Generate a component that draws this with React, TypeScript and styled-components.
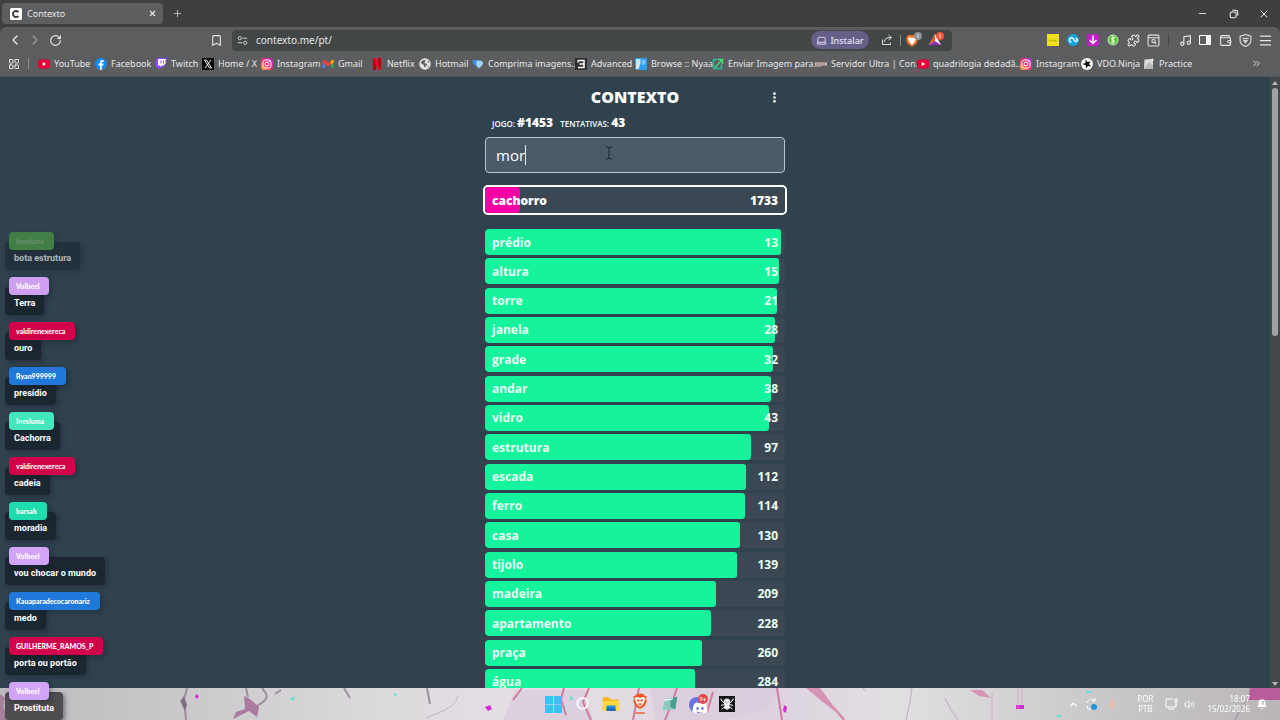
import React from 'react';
import styled, { createGlobalStyle } from 'styled-components';
import {
  ChevronLeft, ChevronRight, RotateCw, Bookmark as BookmarkIcon, LayoutGrid, Laptop, Share, Puzzle,
  Music, PanelRight, Wallet, ShieldCheck, Menu, X, Plus, Minus, Copy, Volume2, ChevronUp, ChevronsRight,
  EllipsisVertical, SquareArrowOutUpRight,
} from 'lucide-react';
import { FaDiscord } from 'react-icons/fa6';

const UI = '"Noto Sans", "Open Sans", sans-serif';
const GAME = '"Open Sans", "Noto Sans", sans-serif';

const Global = createGlobalStyle`
  *, *::before, *::after { box-sizing: border-box; }
  body { margin: 0; background: #2f424e; overflow: hidden; }
  button, input { font: inherit; color: inherit; border: 0; background: none; padding: 0; margin: 0; outline: 0; }
  button { display: flex; align-items: center; justify-content: center; }
  a { color: inherit; text-decoration: none; }
  svg { display: block; flex: none; }
  ul { list-style: none; margin: 0; padding: 0; }
`;

const Screen = styled.div`
  height: 100vh;
  display: flex;
  flex-direction: column;
  position: relative;
  overflow: hidden;
  font-family: ${UI};
  color: #e8e8ea;
`;

/* ---------- browser chrome ---------- */
const TabStrip = styled.header`
  height: 27px;
  flex: none;
  display: flex;
  align-items: center;
  padding: 0 6px 0 2px;
  background: #3f3f41;
`;
const Tab = styled.div`
  width: 161px;
  height: 21px;
  display: flex;
  align-items: center;
  gap: 5px;
  padding: 0 6px 0 8px;
  border-radius: 4px;
  background: #5d5e60;
  font-size: 9px;
`;
const TabTitle = styled.span`
  flex: 1;
`;
const PlusButton = styled.button`
  width: 28px;
  height: 20px;
`;
const WindowControls = styled.div`
  margin-left: auto;
  display: flex;
`;
const WindowButton = styled.button`
  width: 31px;
  height: 20px;
  &:last-child { width: 20px; margin-left: 5px; }
`;
const Toolbar = styled.div`
  height: 26px;
  flex: none;
  display: flex;
  align-items: center;
  padding: 0 5px;
  background: #5c5d5f;
  border-radius: 6px 6px 0 0;
`;
const ToolbarBack = styled.div`
  background: #3f3f41;
  flex: none;
`;
const IconButton = styled.button<{ $dim?: boolean }>`
  width: 20px;
  height: 20px;
  flex: none;
  opacity: ${(p) => (p.$dim ? 0.45 : 1)};
`;
const BookmarkButton = styled(IconButton)`
  margin-left: 141px;
  margin-right: 6px;
`;
const AddressBar = styled.div`
  flex: 1;
  max-width: 720px;
  height: 21px;
  display: flex;
  align-items: center;
  gap: 8px;
  padding: 0 5px;
  border-radius: 4px;
  background: #434647;
`;
const AddressInput = styled.input`
  flex: 1;
  min-width: 0;
  font-size: 10px;
`;
const InstallButton = styled.button`
  width: 58px;
  height: 18px;
  gap: 3px;
  border-radius: 9px;
  background: #665f87;
  color: #e6e2fb;
  font-size: 9px;
  font-weight: 500;
`;
const AddressActions = styled.div`
  display: flex;
  align-items: center;
  gap: 3px;
`;
const Divider = styled.span`
  width: 1px;
  height: 11px;
  background: #8b8c8e;
`;
const Extensions = styled.div`
  margin-left: auto;
  display: flex;
  align-items: center;
`;
const ExtensionDivider = styled.span`
  width: 1px;
  height: 12px;
  margin: 0 6px 0 5px;
  background: #47484a;
`;
const Bookmarks = styled.nav`
  height: 24px;
  flex: none;
  display: grid;
  grid-template-columns: 30px 57px 60px 47px 59px 61px 49px 48px 53px 103px 60px 77px 103px 102px 103px 61px 62px 1fr 20px;
  align-items: center;
  padding: 0 14px 2px 8px;
  background: #5c5d5f;
  border-bottom: 1px solid #4e5558;
  font-size: 9px;
  line-height: 12px;
`;
const BookmarkLink = styled.a`
  display: flex;
  align-items: center;
  gap: 4px;
  white-space: nowrap;
`;
const AppsCell = styled.div`
  display: flex;
  align-items: center;
  gap: 8px;
`;

/* ---------- game page ---------- */
const Viewport = styled.div`
  flex: 1;
  min-height: 0;
  display: flex;
  background: #2f424e;
`;
const Page = styled.main`
  flex: 1;
  min-width: 0;
  overflow: hidden;
  display: flex;
  justify-content: center;
  font-family: ${GAME};
  color: #fff;
`;
const Column = styled.div`
  width: 300px;
  flex: none;
  padding-top: 8px;
`;
const TitleRow = styled.div`
  display: grid;
  grid-template-columns: 22px 1fr 22px;
  align-items: center;
  height: 24px;
`;
const Title = styled.h1`
  grid-column: 2;
  margin: 0;
  text-align: center;
  font-size: 16px;
  line-height: 24px;
  font-weight: 800;
`;
const Stats = styled.div`
  display: flex;
  gap: 7px;
  align-items: baseline;
  padding: 4px 7px 0;
  height: 28px;
  font-size: 8px;
  line-height: 20px;
  font-weight: 600;
  b { font-size: 12px; font-weight: 800; }
`;
const WordField = styled.label`
  position: relative;
  display: flex;
  align-items: center;
  height: 36px;
  padding: 0 10px;
  border: 1px solid #b9c6c8;
  border-radius: 4px;
  background: #4a5a67;
  font-size: 15px;
`;
const WordInput = styled.input`
  field-sizing: content;
  min-width: 8px;
`;
const Caret = styled.span`
  width: 1px;
  height: 20px;
  background: #e9eef0;
`;
const Pointer = styled.svg`
  position: absolute;
  left: 40%;
  top: 8px;
`;
const Guesses = styled.ul`
  display: flex;
  flex-direction: column;
  justify-content: space-between;
  min-height: 466px;
  margin-top: 14px;
`;
const Guess = styled.li<{ $current?: boolean }>`
  position: relative;
  display: flex;
  justify-content: space-between;
  align-items: center;
  height: 26px;
  padding: 0 7px;
  border-radius: 4px;
  overflow: hidden;
  background: #3b4853;
  font-size: 12px;
  font-weight: 700;
  color: #e9fff6;
  ${(p) => p.$current && 'font-weight: 800; color: #fff;'}
`;
const Latest = styled.div`
  margin: 12px -2px 0;
  border: 2px solid #fff;
  border-radius: 5px;
`;
const Bar = styled.span<{ $tone: string }>`
  position: absolute;
  inset: 0 auto 0 0;
  border-radius: 3px;
  background: ${(p) => p.$tone};
`;
const Word = styled.span`
  position: relative;
`;
const ScrollTrack = styled.div`
  width: 10px;
  flex: none;
  display: flex;
  flex-direction: column;
  align-items: center;
  gap: 3px;
  padding: 4px 0 2px;
  background: #45484b;
`;
const ScrollSpace = styled.div`
  flex: 1;
  width: 6px;
`;
const ScrollThumb = styled.div`
  width: 6px;
  height: 41%;
  border-radius: 3px;
  background: #a0a1a3;
`;

/* ---------- chat overlay ---------- */
const Chat = styled.ul`
  position: absolute;
  left: 5px;
  bottom: 0;
  display: flex;
  flex-direction: column;
  gap: 7px;
`;
const Message = styled.li<{ $faded?: boolean }>`
  display: flex;
  flex-direction: column;
  align-items: flex-start;
  height: 38px;
  opacity: ${(p) => (p.$faded ? 0.6 : 1)};
`;
const Author = styled.span<{ $tone: string; $quiet?: boolean }>`
  z-index: 1;
  height: 18px;
  margin-left: 4px;
  padding: 0 10px 0 7px;
  border-radius: 4px;
  background: ${(p) => p.$tone};
  box-shadow: 2px 2px 5px rgba(20, 25, 40, 0.4);
  color: ${(p) => (p.$quiet ? '#8fbf7f' : '#fff')};
  font-family: Lato, sans-serif;
  font-size: 7px;
  line-height: 18px;
  font-weight: 900;
`;
const Bubble = styled.span<{ $over?: boolean }>`
  height: 29px;
  margin-top: -8px;
  padding: 9px 9px 0;
  border-radius: 4px;
  background: ${(p) => (p.$over ? '#4d4c4f' : '#1b2730')};
  box-shadow: 2px 2px 4px rgba(32, 26, 56, 0.45);
  color: #fff;
  font-family: Roboto, sans-serif;
  font-size: 9px;
  line-height: 14px;
  font-weight: 700;
  white-space: nowrap;
`;

/* ---------- taskbar ---------- */
const Taskbar = styled.footer`
  position: relative;
  height: 32px;
  flex: none;
  display: grid;
  grid-template-columns: 1fr auto 1fr;
  align-items: center;
  background: #d8d4d9;
  overflow: hidden;
`;
const Marble = styled.svg`
  position: absolute;
  inset: 0;
  width: 100%;
  height: 100%;
`;
const Pinned = styled.div`
  position: relative;
  grid-column: 2;
  display: flex;
`;
const PinnedButton = styled.button`
  width: 29px;
  height: 30px;
`;
const Tray = styled.div`
  position: relative;
  display: flex;
  align-items: center;
  justify-content: flex-end;
  gap: 6px;
  padding-right: 12px;
  color: #fff;
  font-size: 8px;
  line-height: 10px;
`;
const TrayStack = styled.div<{ $end?: boolean }>`
  display: flex;
  flex-direction: column;
  align-items: ${(p) => (p.$end ? 'flex-end' : 'center')};
  margin-left: ${(p) => (p.$end ? '6px' : '12px')};
  margin-right: ${(p) => (p.$end ? '0' : '6px')};
`;

/* ---------- drawings ---------- */
const S = ({ s = 12, children }: { s?: number; children: React.ReactNode }) => (
  <svg width={s} height={s} viewBox="0 0 24 24" aria-hidden="true">{children}</svg>
);
const YouTube = () => <S><rect y="3" width="24" height="18" rx="4" fill="#e5003c" /><path d="M9.500 8v8l7-4z" fill="#fff" /></S>;
const Facebook = () => <S><circle cx="12" cy="12" r="12" fill="#1688f2" /><path d="M10 24v-9H7v-4h3V8.500C10 5.500 12 4 14.500 4H17v4h-2c-1 0-1.500.5-1.500 1.500V11H17l-.6 4h-2.900v9z" fill="#fff" /></S>;
const Twitch = () => <S><path d="M5 0 1 4v15h5v5l5-5h4l8-8V0z" fill="#9146ff" /><path d="M6 2h15v9l-4 4h-4l-3 3v-3H6z" fill="#fff" /><path d="M11 5h2v6h-2zM16 5h2v6h-2z" fill="#9146ff" /></S>;
const XLogo = () => <S><rect width="24" height="24" fill="#0c0c0c" /><path d="M5 4h4l10 16h-4zM18 4l-12 16" stroke="#fff" strokeWidth="1.800" fill="none" /></S>;
const Insta = () => (
  <S>
    <defs><linearGradient id="ig" x1="0" y1="1" x2="1" y2="0"><stop offset="0" stopColor="#ffc13c" /><stop offset=".45" stopColor="#fb2c62" /><stop offset="1" stopColor="#a72be0" /></linearGradient></defs>
    <rect width="24" height="24" rx="6" fill="url(#ig)" />
    <rect x="4" y="4" width="16" height="16" rx="5" fill="none" stroke="#fff" strokeWidth="2" /><circle cx="12" cy="12" r="4" fill="none" stroke="#fff" strokeWidth="2" /><circle cx="17" cy="7" r="1.200" fill="#fff" />
  </S>
);
const Gmail = () => <S><path d="M1 20V6h5v14z" fill="#4285f4" /><path d="M18 20V6h5v14z" fill="#34a853" /><path d="M1 5l4-1 7 6 7-6 4 1v4l-11 8L1 9z" fill="#ea4335" /><path d="M18 5l5-1v5l-5 4z" fill="#fbbc04" /></S>;
const Netflix = () => <S><path d="M4 0h6v24H4zM14 0h6v24h-6z" fill="#b00012" /><path d="M4 0h6l10 24h-6z" fill="#e50920" /></S>;
const Hotmail = () => <S><circle cx="12" cy="12" r="11.500" fill="#e3e4e5" /><path d="M4 8c4-5 8-5 9-3s-3 3-2 5 5 0 5 3-3 2-4 6c-2-1-2-5-4-6S4 11 4 8zM17 4l4 5-3 1zM18 15l2 1-3 4z" fill="#606163" /></S>;
const Compress = () => <S><path d="M1 4h13v9l-3 5C4 15 1 11 1 4z" fill="#3f8ff0" /><path d="M9 7c2-3 12-3 13 3 0 5-6 9-9 11-2-3-6-9-4-14z" fill="#a5d2fb" /></S>;
const Advanced = () => <S><rect width="24" height="24" fill="#2d2f31" /><path d="M6 5h12v14H6M9 12h9M6 9V5" fill="none" stroke="#fff" strokeWidth="3" /></S>;
const Nyaa = () => <S><rect width="24" height="24" rx="2" fill="#2a9df4" /><path d="M2 2h9v9l-4 11H2z" fill="#cfeaff" /><path d="M13 4h8v8l-6 3z" fill="#7cc6fb" /></S>;
const SendImage = () => <S><path d="M11 3H3v18h16v-8" fill="none" stroke="#2fb9a0" strokeWidth="3" /><path d="M6 19 20 4M12 3h9v9" fill="none" stroke="#3ee07e" strokeWidth="3" /></S>;
const Server = () => <S><path d="M0 9h24v6H0z" fill="#d5c8c8" /><path d="M2 12h20" stroke="#8b4c50" strokeWidth="2" strokeDasharray="3 1" /></S>;
const Ninja = () => <S><circle cx="12" cy="12" r="12" fill="#f4f4f4" /><path d="M9 3l4 5 6-1-3 5 4 5-6-1-4 5v-6l-7-3 6-2z" fill="#111" /></S>;
const Practice = () => <S><path d="M3 3l14-1 3 5v15H2z" fill="#dcdedb" /><path d="M3 20 12 8l8 6v8H3z" fill="#b7bab6" /><path d="m19 0 1 3 3 1-3 1-1 3-1-3-3-1 3-1z" fill="#fff" /></S>;
const Tune = () => <S s={11}><g fill="none" stroke="#d8d9da" strokeWidth="2"><circle cx="6" cy="7" r="3.500" /><path d="M12 7h10M2 17h10" /><circle cx="18" cy="17" r="3.500" /></g></S>;
const Lion = ({ s = 14 }: { s?: number }) => (
  <S s={s}><path d="M7 1h10l2 3 3 1-1 4 1 3-3 8-7 4-7-4-3-8 1-3-1-4 3-1z" fill="#f05a24" /><path d="M6 6l6 1 6-1 2 3-3 7-5 5-5-5-3-7z" fill="#fff" /><path d="M7 9l4 1v3l-2 1zM17 9l-4 1v3l2 1zM9 16l3-1 3 1-3 3z" fill="#f05a24" /></S>
);
const BraveShield = () => (
  <svg width="18" height="18" viewBox="0 0 18 18" aria-hidden="true">
    <path d="M3 4h8l2 3-1 5-5 4-5-4-1-5z" fill="#f2702a" /><path d="M4 6l3 1 3-1 1 2-2 4-2 2-2-2-2-4z" fill="#fff" />
    <circle cx="13" cy="5" r="4" fill="#8d9296" /><path d="M13 3v4" stroke="#e8e8e8" />
  </svg>
);
const Rewards = () => (
  <svg width="18" height="18" viewBox="0 0 18 18" aria-hidden="true">
    <path d="M7 3 13 14H1z" fill="#fff" /><path d="M7 3v7l-6 4z" fill="#f04c2e" /><path d="M1 14l6-4 6 4z" fill="#8b2bb8" />
    <circle cx="12" cy="5" r="4" fill="#f2593c" /><path d="M12 3v4" stroke="#ffd9cf" />
  </svg>
);
const GuardExt = () => <S><rect width="24" height="24" fill="#f0e11c" /><path d="M4 13h16" stroke="#b8a80c" strokeWidth="3" strokeDasharray="3 1" /></S>;
const BlueExt = () => <S><circle cx="12" cy="12" r="12" fill="#17a3e0" /><path d="M5 12a4 4 0 0 1 7-3l3 4a3 3 0 1 0 2-4M9 16a3 3 0 0 1-3-5" fill="none" stroke="#e9f8ff" strokeWidth="3" /></S>;
const DownExt = () => <S><rect width="24" height="24" rx="4" fill="#c31cc9" /><path d="M12 3v16M5 12l7 7 7-7" fill="none" stroke="#fff" strokeWidth="3" /></S>;
const CoinExt = () => <S><circle cx="12" cy="12" r="10" fill="#5bc92f" stroke="#d7e8d2" strokeWidth="2" /><path d="M16 8c-2-2-7-1-7 1.500S15 12 15 15s-5 3-7 1M12 5v14" fill="none" stroke="#fff" strokeWidth="2" /></S>;
const SearchTab = () => <S s={13}><g fill="none" stroke="#e2e2e3" strokeWidth="2"><rect x="2" y="2" width="20" height="20" rx="2" /><path d="M2 7h20" /><circle cx="12" cy="13" r="3" /><path d="m14 15 3 3" /></g></S>;
const Folder = () => <S s={18}><path d="M1 3h8l3 3h10v15H1z" fill="#f5b921" /><path d="M1 8h22v13H1z" fill="#fbd842" /><path d="M6 14h12v7H6z" fill="#2389dc" /><path d="M6 18h12v3H6z" fill="#1263b2" /></S>;
const Win = () => <S s={17}><g fill="#37c4f2"><path d="M0 0h11.500v11.500H0z" /><path d="M12.500 0H24v11.500H12.500zM0 12.500h11.500V24H0zM12.500 12.500H24V24H12.500z" /></g></S>;
const Notepad = () => <S s={17}><path d="M6 4l17-3-3 18-18 1z" fill="#8fc9bd" /><path d="M14 3l9-2-3 18-7-4z" fill="#4a9b91" /><path d="M5 6l12-2" stroke="#eef7f5" strokeWidth="2" /></S>;
const Spider = () => <S s={16}><rect width="24" height="24" fill="#141417" /><path d="M8 10V6c2-2 6-2 8 0v4l-1 4 1 4-4 2-4-2 1-4zM8 11 3 6v-2M16 11l5-5v-2M8 13l-5 1M16 13l5 1M8 16l-4 4M16 16l4 4" fill="#f1f1f1" stroke="#f1f1f1" strokeWidth="1.500" /><path d="M10 9l1 1M14 9l-1 1" stroke="#141417" strokeWidth="1.500" /></S>;
const Discord = () => (
  <svg width="22" height="22" viewBox="0 0 22 22" aria-hidden="true">
    <circle cx="10" cy="12" r="8" fill="#6a72e4" />
    <FaDiscord x="5" y="7" width="10" height="10" color="#fff" />
    <circle cx="16" cy="6" r="5" fill="#e5484f" />
    <text x="16" y="8" fontSize="6" textAnchor="middle" fill="#fff" fontFamily="Roboto">9+</text>
  </svg>
);

const bookmarks: [React.FC, string][] = [
  [YouTube, 'YouTube'], [Facebook, 'Facebook'], [Twitch, 'Twitch'], [XLogo, 'Home / X'], [Insta, 'Instagram'],
  [Gmail, 'Gmail'], [Netflix, 'Netflix'], [Hotmail, 'Hotmail'], [Compress, 'Comprima imagens...'],
  [Advanced, 'Advanced'], [Nyaa, 'Browse :: Nyaa'], [SendImage, 'Enviar Imagem para...'], [Server, 'Servidor Ultra | Con...'],
  [YouTube, 'quadrilogia dedadã...'], [Insta, 'Instagram'], [Ninja, 'VDO.Ninja'], [Practice, 'Practice'],
];

const guesses: [string, number, number][] = [
  ['prédio', 13, 98.5], ['altura', 15, 98], ['torre', 21, 97.300], ['janela', 28, 96.700], ['grade', 32, 96],
  ['andar', 38, 95.300], ['vidro', 43, 94.600], ['estrutura', 97, 88.600], ['escada', 112, 87], ['ferro', 114, 86.600],
  ['casa', 130, 85], ['tijolo', 139, 84], ['madeira', 209, 77], ['apartamento', 228, 75.200], ['praça', 260, 72.300],
  ['água', 284, 70],
];

const messages: [string, string, string][] = [
  ['Inesluma', '#4fa83f', 'bota estrutura'],
  ['Volbeel', '#cfa0f2', 'Terra'],
  ['valdirenexereca', '#d1004b', 'ouro'],
  ['Ryan999999', '#2079da', 'presídio'],
  ['Inesluma', '#43e6bd', 'Cachorra'],
  ['valdirenexereca', '#d1004b', 'cadeia'],
  ['barsak', '#1fdcae', 'moradia'],
  ['Volbeel', '#d2a4f7', 'vou chocar o mundo'],
  ['Kauaparadecocaronariz', '#2079da', 'medo'],
  ['GUILHERME_RAMOS_P', '#d1004b', 'porta ou portão'],
  ['Volbeel', '#d2a4f7', 'Prostituta'],
];

const Wallpaper = () => (
  <Marble viewBox="0 0 1280 32" preserveAspectRatio="none" aria-hidden="true">
    <defs>
      <linearGradient id="stone">
        <stop offset="0" stopColor="#bdbabd" /><stop offset=".15" stopColor="#cbc9cc" /><stop offset=".3" stopColor="#dcdadd" />
        <stop offset=".42" stopColor="#e6dfe6" /><stop offset=".6" stopColor="#ddd3df" /><stop offset=".7" stopColor="#e1dfe2" />
        <stop offset=".85" stopColor="#cbc9cb" /><stop offset="1" stopColor="#b9b5b8" />
      </linearGradient>
    </defs>
    <rect width="1280" height="32" fill="url(#stone)" />
    <path d="M0 6 5 10 3 18 8 32H0z" fill="#a97f9b" />
    <path d="M515 2h70l8 30h-90zM650 0h130l-14 22-40 10h-70z" fill="#d9cbdc" opacity=".7" />
    <g fill="none" stroke="#8f7f90" strokeWidth="2" opacity=".8">
      <path d="M187 0l-2 8-4 5 4 8 1 11" /><path d="M246 0l2 9M262 0c5 6 8 10-2 16l-5 3M275 6l6-4" />
      <path d="M344 0l6 10M427 0l3 16" /><path d="M912 0l-2 14-4 18M945 10l5 10 8 12M863 0l2 3" strokeWidth="1" opacity=".6" />
      <path d="M458 8c-4 14-20 16-32 22" strokeWidth="1" opacity=".5" /><path d="M1235 32l8-16 12-10" strokeWidth="1" />
    </g>
    <path d="M244 8l6 3 9 8-2 10-8-6-16 8 3-7 9-3z" fill="#ab7aa0" />
    <path d="M181 13l3-5 3 9-2 6z" fill="#7f6f84" />
    <g fill="none" stroke="#cf7d9c" strokeWidth="2">
      <path d="M522 0l-9 12M564 0l-3 11 5 16M589 0l-6 14 8 18M639 0l-6 32M677 0l-4 12-8 20M713 4l-6 20M777 0l5 32M810 0l12 12 12 8 10 12" />
    </g>
    <path d="M806 0h14l12 16 14 16-18-14zM970 2h12l9 8-12-2z" fill="#d594b3" />
    <path d="M1250 0h30v12h-32z" fill="#b95c9c" />
    <path d="M196 6l3 2-2 3-2-2zM485 19l5-2 2 4-4 2zM784 17l3 2-1 6-3-2zM1016 17h8v4h-8z" fill="#cf2fd0" />
    <path d="M290 10l5-1-2 4zM394 5l3 1-2 3zM570 8l4 2-4 3zM1086 3h5v2h-5zM1057 27h4v2h-4z" fill="#5ce3d2" />
    <path d="M992 4v28M1018 0v20M1022 0v16" stroke="#d79fbd" opacity=".7" />
  </Marble>
);

export default function App() {
  return (
    <Screen>
      <Global />
      <TabStrip>
        <Tab>
          <S><rect width="24" height="24" rx="3" fill="#fff" /><path d="M17 8c-5-4-11-2-11 4s6 8 11 4" fill="none" stroke="#3b3b3d" strokeWidth="4" /></S>
          <TabTitle>Contexto</TabTitle>
          <button aria-label="Fechar aba"><X size={9} strokeWidth={3} /></button>
        </Tab>
        <PlusButton aria-label="Nova aba"><Plus size={11} strokeWidth={1.500} /></PlusButton>
        <WindowControls>
          <WindowButton aria-label="Minimizar"><Minus size={11} strokeWidth={2} /></WindowButton>
          <WindowButton aria-label="Restaurar">
            <S s={10}><g fill="none" stroke="#f0f0f0" strokeWidth="2.500"><rect x="3" y="7" width="14" height="14" rx="3" /><path d="M8 3h9a4 4 0 0 1 4 4v9" /></g></S>
          </WindowButton>
          <WindowButton aria-label="Fechar"><X size={12} strokeWidth={2} /></WindowButton>
        </WindowControls>
      </TabStrip>
      <ToolbarBack>
        <Toolbar>
          <IconButton aria-label="Voltar"><ChevronLeft size={16} strokeWidth={2} /></IconButton>
          <IconButton aria-label="Avançar" $dim><ChevronRight size={16} strokeWidth={2} /></IconButton>
          <IconButton aria-label="Recarregar"><RotateCw size={13} strokeWidth={2} /></IconButton>
          <BookmarkButton aria-label="Favoritar"><BookmarkIcon size={13} strokeWidth={2} /></BookmarkButton>
          <AddressBar>
            <Tune />
            <AddressInput aria-label="Endereço" defaultValue="contexto.me/pt/" />
            <InstallButton><Laptop size={11} />Instalar</InstallButton>
            <AddressActions>
              <IconButton aria-label="Compartilhar">
                <S><path d="M3 11v10h16v-4M7 16c0-6 4-9 13-9M15 2l6 5-6 5" fill="none" stroke="#dedede" strokeWidth="2" /></S>
              </IconButton>
              <Divider />
              <IconButton aria-label="Escudos"><BraveShield /></IconButton>
              <IconButton aria-label="Recompensas"><Rewards /></IconButton>
            </AddressActions>
          </AddressBar>
          <Extensions>
            <IconButton aria-label="Extensão amarela"><GuardExt /></IconButton>
            <IconButton aria-label="Extensão azul"><BlueExt /></IconButton>
            <IconButton aria-label="Baixar"><DownExt /></IconButton>
            <IconButton aria-label="Cupons"><CoinExt /></IconButton>
            <IconButton aria-label="Extensões"><Puzzle size={13} /></IconButton>
            <IconButton aria-label="Pesquisar abas"><SearchTab /></IconButton>
            <ExtensionDivider />
            <IconButton aria-label="Música"><Music size={13} /></IconButton>
            <IconButton aria-label="Barra lateral">
              <S><path d="M1 3h22v18H1z" fill="none" stroke="#fff" strokeWidth="2" /><path d="M14 3h9v18h-9z" fill="#fff" /></S>
            </IconButton>
            <IconButton aria-label="Carteira"><Wallet size={13} /></IconButton>
            <IconButton aria-label="VPN">
              <S s={13}><path d="M12 1l10 3v8c0 5-5 9-10 11C7 21 2 17 2 12V4z" fill="none" stroke="#e2e2e3" strokeWidth="2" /><path d="M6 7h12l-2 6-4 5-4-5z" fill="#d4d4d5" /><path d="M7 10h10" stroke="#5c5d5f" strokeWidth="1.500" /></S>
            </IconButton>
            <IconButton aria-label="Menu"><Menu size={15} strokeWidth={2} /></IconButton>
          </Extensions>
        </Toolbar>
      </ToolbarBack>
      <Bookmarks>
        <AppsCell><LayoutGrid size={12} /><Divider /></AppsCell>
        {bookmarks.map(([Icon, label], i) => (
          <BookmarkLink key={i} href="#"><Icon />{label}</BookmarkLink>
        ))}
        <button aria-label="Mais favoritos"><ChevronsRight size={11} /></button>
      </Bookmarks>

      <Viewport>
        <Page>
          <Column>
            <TitleRow>
              <Title>CONTEXTO</Title>
              <button aria-label="Opções"><EllipsisVertical size={13} strokeWidth={3} /></button>
            </TitleRow>
            <Stats>
              <span>JOGO: <b>#1453</b></span>
              <span>TENTATIVAS: <b>43</b></span>
            </Stats>
            <WordField>
              <WordInput aria-label="Digite uma palavra" defaultValue="mor" />
              <Caret />
              <Pointer width="8" height="14" viewBox="0 0 8 14" aria-hidden="true">
                <path d="M1 1h2l1 1 1-1h2M4 2v10M1 13h2l1-1 1 1h2" fill="none" stroke="#1d272e" />
              </Pointer>
            </WordField>
            <Latest>
              <Guess as="div" $current>
                <Bar $tone="#f500a5" style={{ width: '11.500%' }} />
                <Word>cachorro</Word>
                <Word>1733</Word>
              </Guess>
            </Latest>
            <Guesses>
              {guesses.map(([word, rank, pct]) => (
                <Guess key={word}>
                  <Bar $tone="#15f49c" style={{ width: `${pct}%` }} />
                  <Word>{word}</Word>
                  <Word>{rank}</Word>
                </Guess>
              ))}
            </Guesses>
          </Column>
        </Page>
        <ScrollTrack aria-hidden="true">
          <svg width="6" height="4" viewBox="0 0 6 4"><path d="M3 0l3 4H0z" fill="#b5b6b8" /></svg>
          <ScrollThumb />
          <ScrollSpace />
          <svg width="6" height="4" viewBox="0 0 6 4"><path d="M3 4l3-4H0z" fill="#b5b6b8" /></svg>
        </ScrollTrack>
      </Viewport>

      <Taskbar>
        <Wallpaper />
        <Pinned>
          <PinnedButton aria-label="Iniciar"><Win /></PinnedButton>
          <PinnedButton aria-label="Pesquisar"><S s={16}><circle cx="13" cy="11" r="8" fill="none" stroke="#f6f4f8" strokeWidth="3" /></S></PinnedButton>
          <PinnedButton aria-label="Explorador"><Folder /></PinnedButton>
          <PinnedButton aria-label="Brave">
            <svg width="16" height="22" viewBox="0 0 16 22" aria-hidden="true"><Lion s={16} /><rect x="3" y="19" width="10" height="2" rx="1" fill="#ef7e66" /></svg>
          </PinnedButton>
          <PinnedButton aria-label="Bloco de notas"><Notepad /></PinnedButton>
          <PinnedButton aria-label="Discord"><Discord /></PinnedButton>
          <PinnedButton aria-label="Aranha"><Spider /></PinnedButton>
        </Pinned>
        <Tray>
          <ChevronUp size={11} strokeWidth={3} />
          <svg width="14" height="14" viewBox="0 0 14 14" aria-hidden="true"><path d="M2 6c1-4 6-5 8-2M10 1v3H7M2 9l1 3h3" fill="none" stroke="#fff" /><circle cx="9" cy="10" r="3" fill="#2196d6" /></svg>
          <svg width="14" height="14" viewBox="0 0 14 14" aria-hidden="true"><path d="M8 1c1 4 3 5 1 10l-4 1c-2-3 0-6 3-11z" fill="#e8bfb4" /></svg>
          <TrayStack><span>POR</span><span>PTB</span></TrayStack>
          <svg width="13" height="12" viewBox="0 0 13 12" aria-hidden="true"><path d="M8 1H1v8h10V6M3 11h6M10 1h2v3h-2zM11 4v3" fill="none" stroke="#fff" /></svg>
          <Volume2 size={11} />
          <TrayStack $end><span>18:07</span><span>15/02/2026</span></TrayStack>
          <S><path d="M3 18h18l-2-4V9c0-9-14-9-14 0v5zM9 20h6l-3 3z" fill="#fff" /><path d="M12 7h4l-4 5h4" fill="none" stroke="#b9b5b8" strokeWidth="2" /></S>
        </Tray>
      </Taskbar>

      <Chat aria-label="Chat">
        {messages.map(([name, tone, text], i) => (
          <Message key={i} $faded={i === 0}>
            <Author $tone={tone} $quiet={i === 0}>{name}</Author>
            <Bubble $over={i === messages.length - 1}>{text}</Bubble>
          </Message>
        ))}
      </Chat>
    </Screen>
  );
}
